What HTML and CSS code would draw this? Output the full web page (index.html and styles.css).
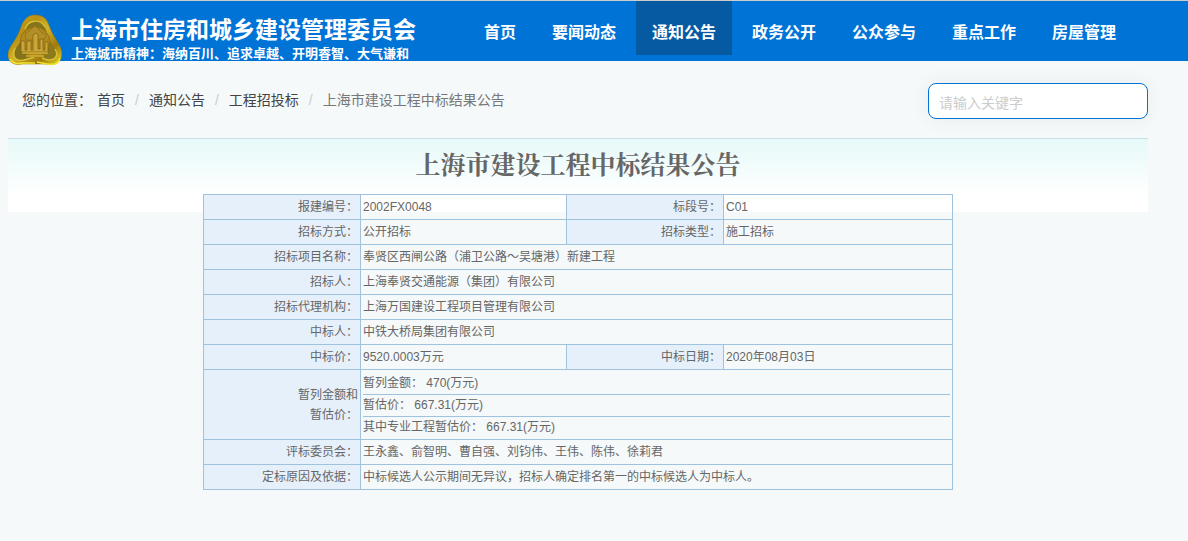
FILE: index.html
```html
<!DOCTYPE html>
<html lang="zh-CN">
<head>
<meta charset="utf-8">
<title>上海市建设工程中标结果公告</title>
<link rel="stylesheet" href="styles.css">
</head>
<body>
<header class="header">
  <div class="brand">
    <svg class="logo" viewBox="0 0 54 52" aria-hidden="true">
      <defs>
        <linearGradient id="rim" x1="0" y1="0" x2="1" y2="1">
          <stop offset="0" stop-color="#d6b428"/>
          <stop offset=".3" stop-color="#b98f14"/>
          <stop offset=".5" stop-color="#d3b32a"/>
          <stop offset=".75" stop-color="#a07a0c"/>
          <stop offset="1" stop-color="#e6da22"/>
        </linearGradient>
      </defs>
      <path d="M27 1C34 1 38 4 40 9Q43 18 50 29C54 35 55 42 52 46C49 51 43 51 37 50H14C6 52 0 48 0 41C0 37 2 33 5 29Q11 20 13 13C16 5 20 1 27 1Z" fill="url(#rim)" stroke="#9a7a10" stroke-width=".6"/>
      <path d="M18 13C22 5 32 4 36 12L39 18Q30 11 18 16Z" fill="#85761e"/>
      <path d="M8 34L13 27Q13 40 26 44L17 46C8 48 4 43 8 34Z" fill="#85731c"/>
      <path d="M42 27L47 35C51 43 47 47 39 46L33 44Q43 39 42 27Z" fill="#8c7a1c"/>
      <path d="M17 15C20 6 32 4 37 13M7 34C3 42 7 48 16 46L27 43M34 44C45 49 52 43 47 35" fill="none" stroke="#dcc033" stroke-width="1.4"/>
      <circle cx="27" cy="28" r="15" fill="#b18a1e" stroke="#8a6a10" stroke-width=".8"/>
      <path d="M17 19Q22 18 23 15L27 12L31 15Q32 19 38 20L36 26H18Z" fill="#b28e26" stroke="#936e14" stroke-width=".7"/>
      <path d="M13 27H17V36H19V27H23V36H25V21L28 19L30 21V35H32V25H35V36H37V28H40V38H13Z" fill="#c8a63a" stroke="#7d5b0c" stroke-width=".7"/>
      <path d="M14 39H40M18 42H36" stroke="#cfae38" stroke-width="1.4"/>
      <path d="M2 45Q6 51 14 49H27M29 48L39 50Q50 52 52 44" fill="none" stroke="#eee32d" stroke-width="1.6"/>
    </svg>
    <div class="brand-text">
      <div class="brand-name">上海市住房和城乡建设管理委员会</div>
      <div class="brand-motto">上海城市精神：海纳百川、追求卓越、开明睿智、大气谦和</div>
    </div>
  </div>
  <nav class="nav">
    <a href="#">首页</a>
    <a href="#">要闻动态</a>
    <a href="#" class="active" aria-current="page">通知公告</a>
    <a href="#">政务公开</a>
    <a href="#">公众参与</a>
    <a href="#">重点工作</a>
    <a href="#">房屋管理</a>
  </nav>
</header>
<div class="toolbar">
  <div class="crumbs">
    <span>您的位置：</span>
    <ol class="crumb-list">
      <li><a href="#">首页</a></li>
      <li><a href="#">通知公告</a></li>
      <li><a href="#">工程招投标</a></li>
      <li class="current">上海市建设工程中标结果公告</li>
    </ol>
  </div>
  <input class="search" type="text" placeholder="请输入关键字" aria-label="请输入关键字">
</div>
<main class="content">
  <h1 class="title">上海市建设工程中标结果公告</h1>
  <table class="result">
    <colgroup><col class="col-label"><col class="col-value"><col class="col-label"><col></colgroup>
    <tr><th scope="row">报建编号：</th><td>2002FX0048</td><th scope="row">标段号：</th><td>C01</td></tr>
    <tr><th scope="row">招标方式：</th><td>公开招标</td><th scope="row">招标类型：</th><td>施工招标</td></tr>
    <tr><th scope="row">招标项目名称：</th><td colspan="3">奉贤区西闸公路（浦卫公路～吴塘港）新建工程</td></tr>
    <tr><th scope="row">招标人：</th><td colspan="3">上海奉贤交通能源（集团）有限公司</td></tr>
    <tr><th scope="row">招标代理机构：</th><td colspan="3">上海万国建设工程项目管理有限公司</td></tr>
    <tr><th scope="row">中标人：</th><td colspan="3">中铁大桥局集团有限公司</td></tr>
    <tr><th scope="row">中标价：</th><td>9520.0003万元</td><th scope="row">中标日期：</th><td>2020年08月03日</td></tr>
    <tr><th scope="row" class="two-line">暂列金额和<br>暂估价：</th>
      <td colspan="3" class="amounts">
        <div>暂列金额： 470(万元)</div>
        <div>暂估价： 667.31(万元)</div>
        <div>其中专业工程暂估价： 667.31(万元)</div>
      </td></tr>
    <tr><th scope="row">评标委员会：</th><td colspan="3">王永鑫、俞智明、曹自强、刘钧伟、王伟、陈伟、徐莉君</td></tr>
    <tr><th scope="row">定标原因及依据：</th><td colspan="3">中标候选人公示期间无异议，招标人确定排名第一的中标候选人为中标人。</td></tr>
  </table>
</main>
</body>
</html>
```
FILE: styles.css
```css
* { box-sizing: border-box; }
body {
  margin: 0;
  background: #f5f9fa;
  color: #555;
  font-family: "Liberation Sans", "Noto Sans CJK SC", sans-serif;
  font-size: 14px;
}
a { color: inherit; text-decoration: none; }

.header {
  display: flex;
  gap: 52px;
  height: 61px;
  padding-left: 8px;
  border-top: 1px solid #ccc;
  background: #0073d7;
  color: #fff;
}
.brand { display: flex; gap: 9px; flex: none; }
.logo { width: 54px; height: 52px; margin-top: 13px; }
.brand-text { padding-top: 13px; white-space: nowrap; }
.brand-name { font-size: 23px; line-height: 32px; font-weight: 700; }
.brand-motto { font-size: 13px; line-height: 16px; font-weight: 700; }

.nav { display: flex; gap: 4px; align-items: flex-start; }
.nav a {
  padding: 10px 16px 0;
  font-size: 16px;
  line-height: 44px;
  font-weight: 700;
  white-space: nowrap;
}
.nav .active { background: #065aa1; }

.toolbar {
  display: flex;
  justify-content: space-between;
  align-items: flex-start;
  padding: 22px 40px 19px 22px;
}
.crumbs { display: flex; gap: 5px; padding-top: 7px; color: #444; line-height: 20px; }
.crumb-list { display: flex; margin: 0; padding: 0; list-style: none; }
.crumb-list li + li::before { content: "/"; padding: 0 10px; color: #ccc; }
.crumb-list .current { color: #777; }
.search {
  width: 220px;
  height: 36px;
  padding: 4px 10px 0;
  border: 1px solid #0073d7;
  border-radius: 8px;
  background: #fff;
  box-shadow: 0 0 20px rgba(0, 0, 0, .06);
  font: inherit;
}
.search::placeholder { color: #ccc; opacity: 1; }

.content {
  margin: 0 40px 0 8px;
  border-top: 1px solid #cadfec;
  background: linear-gradient(#e6f9f8, #fff 56px) no-repeat 0 0 / 100% 73px;
}
.title {
  margin: 0;
  padding: 9px 0 10px;
  color: #666;
  font-family: "Liberation Serif", "Noto Serif CJK SC", "Noto Sans CJK SC", serif;
  font-size: 25px;
  line-height: 36px;
  font-weight: 700;
  text-align: center;
}
.result {
  width: 750px;
  max-width: 100%;
  margin: 0 auto;
  border-collapse: collapse;
  table-layout: fixed;
  color: #666;
  font-size: 12px;
  line-height: 24px;
}
.col-label { width: 157px; }
.col-value { width: 206px; }
.result th, .result td { padding: 0 2px; border: 1px solid #9fc2de; }
.result th { background: #e6f0fb; font-weight: 400; text-align: right; }
.result .two-line { line-height: 20px; }
.result .amounts { padding: 3px 2px 1px; line-height: 21px; }
.amounts div + div { border-top: 1px solid #9fc2de; }
```
